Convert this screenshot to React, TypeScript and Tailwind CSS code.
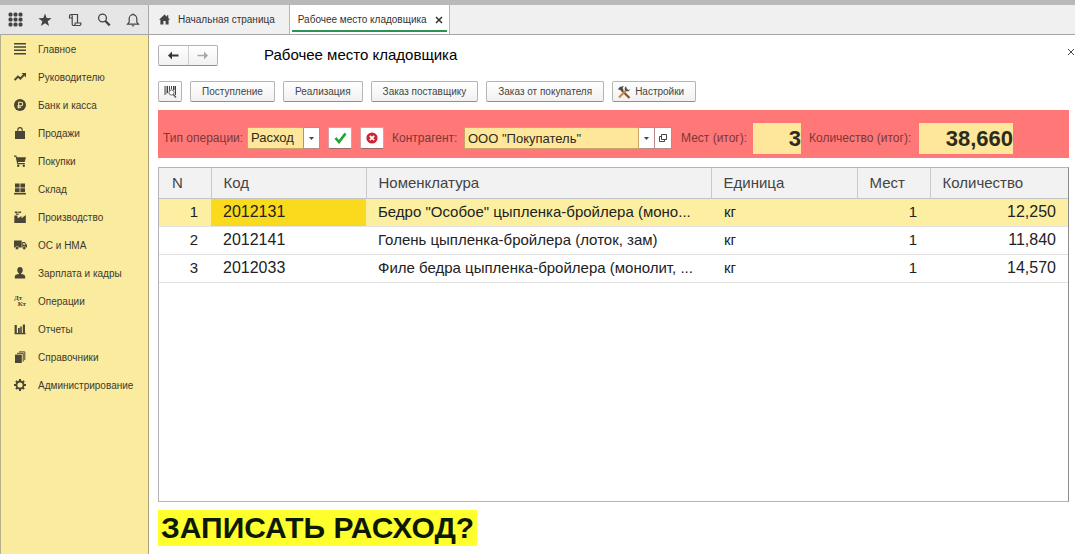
import React, { useState } from 'react';

const cn = (...classes: any[]) => classes.filter(Boolean).join(' ');

const Icon = ({ size = 12, children }: any) => (
  <svg width={size} height={size} viewBox="0 0 12 12" fill="currentColor" className="shrink-0" aria-hidden="true">
    {children}
  </svg>
);

const MenuIcon = () => (
  <Icon><path d="M0 0h12v1.500H0zM0 3.300h12v1.500H0zM0 6.600h12v1.500H0zM0 10h12v1.500H0z" /></Icon>
);

const TrendIcon = () => (
  <Icon>
    <path d="M.6 9 4 5.600l2.400 2L10 3.800" fill="none" stroke="currentColor" strokeWidth="2" />
    <path d="M7.600 2H12v4.400z" />
  </Icon>
);

const RubleIcon = () => (
  <Icon>
    <circle cx="6" cy="6" r="6" />
    <path d="M4.700 9.600V3.200h2.200a1.700 1.700 0 0 1 0 3.500H3.400M3.400 8.200h3.800" fill="none" stroke="#fbeb9e" strokeWidth="1.100" />
  </Icon>
);

const BagIcon = () => (
  <Icon>
    <path d="M3.800 4.500V2.800a2.200 2.200 0 0 1 4.400 0v1.700" fill="none" stroke="currentColor" strokeWidth="1.100" />
    <path d="M1 4h10v8H1z" />
  </Icon>
);

const CartIcon = () => (
  <Icon>
    <path d="M0 .6h2.300l.6 1.600H12L10.700 7H4l.2 1h6.600v1.200H3.300L1.600 1.800H0z" />
    <circle cx="4.200" cy="10.800" r="1.200" />
    <circle cx="9.800" cy="10.800" r="1.200" />
  </Icon>
);

const StockIcon = () => (
  <Icon><path d="M1 .5h4.600v4H1zM6.400.5H11v4H6.400zM1 5.200h4.600v4H1zM6.400 5.200H11v4H6.400zM0 10h12v1.600H0z" /></Icon>
);

const FactoryIcon = () => (
  <Icon>
    <path d="M.3 4.500h3l.6 2.700L7.500 5v2.200L11.800 4V12H.3z" />
    <path d="M.8.600h2.700v1.400H.8zM1.800 2.400h3v1.400h-3zM4.400.6h2.700v1.300H4.400z" />
  </Icon>
);

const TruckIcon = () => (
  <svg width="13" height="12" viewBox="0 0 13 12" fill="currentColor" className="shrink-0" aria-hidden="true">
    <path d="M0 1.500h7.700v7.100H0zM8.200 3h2.600L13 6v2.600H8.200zM9.200 4v1.800h2.400L10.300 4z" fillRule="evenodd" />
    <circle cx="3" cy="9" r="1.700" stroke="#fbeb9e" strokeWidth=".5" />
    <circle cx="10.200" cy="9" r="1.700" stroke="#fbeb9e" strokeWidth=".5" />
  </svg>
);

const PersonIcon = () => (
  <Icon>
    <ellipse cx="6" cy="3.200" rx="2.700" ry="3.100" />
    <path d="M4.900 5.500h2.200v1.600c2.200.3 4.100 1 4.100 2.500v1.900H.8V9.600c0-1.500 1.900-2.200 4.100-2.500z" />
  </Icon>
);

const DebitCreditIcon = () => (
  <span className="flex w-3 shrink-0 flex-col font-['Liberation_Serif',serif] text-[7px] leading-[6px] font-bold" aria-hidden="true">
    <span>Дт</span>
    <span className="self-end">Кт</span>
  </span>
);

const ReportIcon = () => (
  <Icon><path d="M.6 2h2.200v8H.6zM4 5h1.800v5H4zM6.200 3.500h1.600V10H6.200zM8.800 1.500h2.200V10H8.800zM.6 10h11v1.300H.6z" /></Icon>
);

const BooksIcon = () => (
  <Icon>
    <path d="M1 3.600h6.800V12H1z" />
    <path d="M3 2.300h6.200V10.500M5 .9h5.800v8.200" fill="none" stroke="currentColor" strokeWidth="1" />
  </Icon>
);

const GearIcon = () => (
  <Icon>
    <path d="M6 0v12M0 6h12M1.900 1.900l8.200 8.200M10.100 1.900l-8.200 8.200" stroke="currentColor" strokeWidth="2" />
    <circle cx="6" cy="6" r="4.500" />
    <circle cx="6" cy="6" r="2.600" fill="#fbeb9e" />
  </Icon>
);

const SECTIONS = [
  { title: 'Главное', icon: MenuIcon },
  { title: 'Руководителю', icon: TrendIcon },
  { title: 'Банк и касса', icon: RubleIcon },
  { title: 'Продажи', icon: BagIcon },
  { title: 'Покупки', icon: CartIcon },
  { title: 'Склад', icon: StockIcon },
  { title: 'Производство', icon: FactoryIcon },
  { title: 'ОС и НМА', icon: TruckIcon },
  { title: 'Зарплата и кадры', icon: PersonIcon },
  { title: 'Операции', icon: DebitCreditIcon },
  { title: 'Отчеты', icon: ReportIcon },
  { title: 'Справочники', icon: BooksIcon },
  { title: 'Администрирование', icon: GearIcon },
];

const ROWS = [
  { code: '2012131', name: 'Бедро "Особое" цыпленка-бройлера (моно...', unit: 'кг', places: 1, qty: '12,250' },
  { code: '2012141', name: 'Голень цыпленка-бройлера (лоток, зам)', unit: 'кг', places: 1, qty: '11,840' },
  { code: '2012033', name: 'Филе бедра цыпленка-бройлера (монолит, ...', unit: 'кг', places: 1, qty: '14,570' },
];

const TOOLS = [
  {
    label: 'Меню функций',
    icon: (
      <svg width="15" height="15" viewBox="0 0 15 15" fill="currentColor" aria-hidden="true">
        {[1, 6, 11].map((y) => [1, 6, 11].map((x) => <rect key={`${x}-${y}`} x={x - 0.5} y={y - 0.5} width="4" height="4" rx="1.500" />))}
      </svg>
    ),
  },
  {
    label: 'Избранное',
    icon: (
      <svg width="14" height="14" viewBox="0 0 14 14" fill="currentColor" aria-hidden="true">
        <path d="M7 .5 8.700 5.100l4.900.2-3.900 3 1.400 4.700L7 10.300 2.900 13l1.400-4.700-3.900-3 4.900-.2z" />
      </svg>
    ),
  },
  {
    label: 'История',
    icon: (
      <svg width="14" height="14" viewBox="0 0 14 14" fill="none" stroke="currentColor" strokeWidth="1.200" aria-hidden="true">
        <path d="M4 5H1.500V3A1.500 1.500 0 0 1 3 1.500h6.500V10M3 1.500A1.500 1.500 0 0 1 4.200 3v8a1.500 1.500 0 0 0 1.500 1.500h6A1.200 1.200 0 0 0 12.800 11v-1H7.200v1a1.500 1.500 0 0 1-1.500 1.500" />
      </svg>
    ),
  },
  {
    label: 'Поиск',
    icon: (
      <svg width="14" height="14" viewBox="0 0 14 14" fill="none" stroke="currentColor" aria-hidden="true">
        <circle cx="5.500" cy="5" r="3.900" strokeWidth="1.300" />
        <path d="m8.400 8 4.300 4.300" strokeWidth="2.400" />
      </svg>
    ),
  },
  {
    label: 'Уведомления',
    icon: (
      <svg width="14" height="14" viewBox="0 0 14 14" fill="none" stroke="currentColor" strokeWidth="1.200" aria-hidden="true">
        <path d="M1.500 11.200h11L10.800 9V5.500a3.800 3.800 0 0 0-7.600 0V9zM7 1.700V.4" />
        <path d="M5.300 12.300h3.400L7 13.800z" fill="currentColor" stroke="none" />
      </svg>
    ),
  },
];

const Caret = () => (
  <svg width="5" height="3" viewBox="0 0 5 3" fill="#444" aria-hidden="true">
    <path d="M0 0h5L2.500 3z" />
  </svg>
);

const ToolbarButton = ({ className, children, ...rest }: any) => (
  <button
    className={cn(
      'flex h-[21px] items-center justify-center rounded-xs border border-[#b4b4b4] border-b-[#8f8f8f] bg-linear-to-b from-white to-[#f1f1f1] text-[10px] whitespace-nowrap text-[#444]',
      className
    )}
    {...rest}
  >
    {children}
  </button>
);

const Sidebar = () => (
  <nav className="w-[149px] shrink-0 border-r border-l border-r-[#a9a27a] border-l-[#b5b08c] bg-[#fbeb9e]">
    {SECTIONS.map(({ title, icon: SectionIcon }) => (
      <a key={title} href="#" className="flex h-7 items-center pl-[13px] text-[10px] whitespace-nowrap text-[#3c3a30]">
        <span className="flex w-6 text-[#4a4636]"><SectionIcon /></span>
        {title}
      </a>
    ))}
  </nav>
);

const TopBar = () => (
  <header className="flex h-[35px] border-t-5 border-b border-t-[#b9b9b9] border-b-[#a6a6a6] bg-[#f0f0f0]">
    <div className="flex w-[149px] shrink-0 items-center justify-between border-r border-[#a6a6a6] bg-[#e6e6e6] pr-2 pl-2">
      {TOOLS.map((tool) => (
        <button key={tool.label} aria-label={tool.label} className="text-[#444]">{tool.icon}</button>
      ))}
    </div>
    <a href="#" className="flex items-center gap-2 border-r border-[#b5b5b5] pr-3.5 pl-[10px] text-[10px] whitespace-nowrap text-[#333]">
      <svg width="11" height="11" viewBox="0 0 11 11" fill="#444" aria-hidden="true">
        <path d="M5.500.5 0 5.800h1.400V10.500h3V7h2.200v3.500h3V5.800H11L9.300 4.100V1.300H8v1.500z" />
      </svg>
      Начальная страница
    </a>
    <div className="flex border-r border-[#b5b5b5] bg-white px-0.5">
      <div className="mb-0.5 flex items-center gap-2 border-b-2 border-[#2f9153] pt-1 pr-1 pl-1.5 text-[10px] whitespace-nowrap text-[#333]">
        Рабочее место кладовщика
        <button aria-label="Закрыть вкладку">
          <svg width="8" height="8" viewBox="0 0 8 8" stroke="#333" strokeWidth="1.500" aria-hidden="true"><path d="m1 1 6 6M7 1 1 7" /></svg>
        </button>
      </div>
    </div>
  </header>
);

const OperationPanel = () => {
  const [type, setType] = useState('Расход');
  const [partner, setPartner] = useState('ООО "Покупатель"');

  return (
    <div className="mt-2 flex h-12 items-center bg-[#ff7777] pt-2 pl-[5px] text-xs whitespace-nowrap text-[#7a3838]">
      <label htmlFor="type" className="w-[84px]">Тип операции:</label>
      <div className="relative flex">
        <select
          id="type"
          value={type}
          onChange={(e) => setType(e.target.value)}
          className="h-[22px] w-[73px] appearance-none border border-[#c9a36a] bg-[#fee69a] pl-[3px] text-[13px] text-[#2b2b1c]"
        >
          <option>Расход</option>
          <option>Приход</option>
        </select>
        <span className="pointer-events-none absolute inset-y-0 right-0 flex w-[17px] items-center justify-center border border-[#b98b8b] bg-white"><Caret /></span>
      </div>
      <button aria-label="Записать" className="ml-2 flex h-[22px] w-6 items-center justify-center rounded-xs border border-[#d9a0a0] border-b-[#9a6a6a] bg-white">
        <svg width="13" height="12" viewBox="0 0 13 12" fill="none" stroke="#1fa32e" strokeWidth="2.600" aria-hidden="true"><path d="m1.500 6 3.500 4L11.500 1.500" /></svg>
      </button>
      <button aria-label="Отменить" className="ml-2 flex h-[22px] w-6 items-center justify-center rounded-xs border border-[#d9a0a0] border-b-[#9a6a6a] bg-white">
        <svg width="12" height="12" viewBox="0 0 12 12" aria-hidden="true">
          <circle cx="6" cy="6" r="5.600" fill="#cb2635" />
          <path d="m3.800 3.800 4.400 4.400M8.200 3.800 3.800 8.200" stroke="#fff" strokeWidth="1.700" />
        </svg>
      </button>
      <label htmlFor="partner" className="ml-2 w-[72px]">Контрагент:</label>
      <input
        id="partner"
        value={partner}
        onChange={(e) => setPartner(e.target.value)}
        className="h-[22px] w-[175px] min-w-0 border border-[#c9a36a] bg-[#fee69a] pl-[3px] text-[13px] text-[#2b2b1c]"
      />
      <button aria-label="Выбрать из списка" className="flex h-[22px] w-4 items-center justify-center border-y border-r border-[#b98b8b] bg-white"><Caret /></button>
      <button aria-label="Открыть" className="flex h-[22px] w-[17px] items-center justify-center border-y border-r border-[#b98b8b] bg-white">
        <svg width="8" height="8" viewBox="0 0 8 8" fill="none" stroke="#444" aria-hidden="true"><path d="M2.500.5h5v5h-5zM2.500 2.500h-2v5h5v-2" /></svg>
      </button>
      <label htmlFor="places" className="ml-[9px] w-[72px]">Мест (итог):</label>
      <output id="places" className="w-12 bg-[#fee69a] text-right text-[22px] leading-[31px] font-bold text-[#2b2b1c]">3</output>
      <label htmlFor="total" className="ml-2 w-[110px]">Количество (итог):</label>
      <output id="total" className="w-[94px] bg-[#fee69a] text-right text-[22px] leading-[31px] font-bold text-[#2b2b1c]">38,660</output>
    </div>
  );
};

const ItemsTable = () => {
  const [selected, setSelected] = useState(0);

  return (
    <div className="mt-[9px] flex-1 border border-[#b4b4b4] border-r-[#8c8c8c] bg-white">
      <table className="w-full table-fixed border-collapse text-[15px] text-[#222]">
        <colgroup>
          <col className="w-[52px]" />
          <col className="w-[155px]" />
          <col />
          <col className="w-[146px]" />
          <col className="w-[73px]" />
          <col className="w-[138px]" />
        </colgroup>
        <thead>
          <tr className="h-[30px] border-b border-[#c4c4c4] bg-[#f2f2f2] text-left text-[#444]">
            {['N', 'Код', 'Номенклатура', 'Единица', 'Мест', 'Количество'].map((h) => (
              <th key={h} className="border-l border-[#c9c9c9] py-0 pl-3 font-normal first:border-l-0 first:pl-[13px]">{h}</th>
            ))}
          </tr>
        </thead>
        <tbody>
          {ROWS.map((row, idx) => (
            <tr
              key={row.code}
              onClick={() => setSelected(idx)}
              className={cn('h-7 border-b border-[#e2e2e2]', selected === idx && 'bg-[#fcefa1]')}
            >
              <td className="py-0 pr-[13px] text-right">{idx + 1}</td>
              <td className={cn('py-0 pl-3 text-base', selected === idx && 'bg-[#f9da1c]')}>{row.code}</td>
              <td className="py-0 pl-3 whitespace-nowrap">{row.name}</td>
              <td className="py-0 pl-[13px]">{row.unit}</td>
              <td className="py-0 pr-[13px] text-right">{row.places}</td>
              <td className="py-0 pr-3 text-right text-base">{row.qty}</td>
            </tr>
          ))}
        </tbody>
      </table>
    </div>
  );
};

export default function App() {
  return (
    <div className="flex min-h-screen flex-col bg-white font-['Liberation_Sans',Arial,sans-serif]">
      <TopBar />
      <div className="flex flex-1">
        <Sidebar />
        <main className="flex min-w-0 flex-1 flex-col pt-[9px] pr-1.5 pb-2 pl-[9px]">
          <div className="flex items-center">
            <div className="flex h-[21px] w-[60px] rounded-xs border border-[#b4b4b4] border-b-[#8f8f8f] bg-linear-to-b from-white to-[#f1f1f1]">
              <button aria-label="Назад" className="flex flex-1 items-center justify-center border-r border-[#cfcfcf]">
                <svg width="12" height="9" viewBox="0 0 12 9" aria-hidden="true"><path d="M5 .5 1 4.500l4 4V5.500h6.500v-2H5z" fill="#333" /></svg>
              </button>
              <button aria-label="Вперед" className="flex flex-1 items-center justify-center">
                <svg width="12" height="9" viewBox="0 0 12 9" aria-hidden="true"><path d="m7 .5 4 4-4 4V5.300H.5V3.700H7z" fill="#a8a8a8" /></svg>
              </button>
            </div>
            <h1 className="ml-[46px] flex-1 text-[15px] leading-[22px] text-black">Рабочее место кладовщика</h1>
            <button aria-label="Закрыть" className="-mr-1.5 mb-1.5">
              <svg width="8" height="8" viewBox="0 0 8 8" stroke="#444" aria-hidden="true"><path d="m1 1 6 6M7 1 1 7" /></svg>
            </button>
          </div>
          <div className="mt-[15px] flex gap-2">
            <ToolbarButton className="w-6" aria-label="Поиск по штрихкоду">
              <svg width="13" height="13" viewBox="0 0 13 13" aria-hidden="true">
                <path d="M1 1v9M3.500 1v7M5.500 1v5M7.500 1v3M9.500 1v4M11.500 1v9" stroke="#444" />
                <path d="M2.300 1v8M10.500 1v4" stroke="#444" strokeWidth=".6" />
                <circle cx="7.500" cy="7.500" r="2.600" fill="#fff" stroke="#666" />
                <path d="m9.300 9.500 2.700 3" stroke="#555" strokeWidth="1.400" />
              </svg>
            </ToolbarButton>
            <ToolbarButton className="px-[11px]">Поступление</ToolbarButton>
            <ToolbarButton className="px-[11px]">Реализация</ToolbarButton>
            <ToolbarButton className="px-[11px]">Заказ поставщику</ToolbarButton>
            <ToolbarButton className="px-[11px]">Заказ от покупателя</ToolbarButton>
            <ToolbarButton className="gap-1 pr-[11px] pl-1">
              <svg width="14" height="14" viewBox="0 0 14 14" fill="none" aria-hidden="true">
                <path d="M5 5.500 12.500 13" stroke="#8a4f22" strokeWidth="2.200" />
                <path d="M1 4.500C2 2 4 1 7 1.200L5.500 3l1 1.500L4.500 6.500 3.300 5z" fill="#4b4b4b" />
                <path d="M9.500 5 2 12.500" stroke="#c28a45" strokeWidth="2.200" />
                <path d="M9 1.200a3 3 0 0 0-.5 4.300 3 3 0 0 0 4.800-1.200L11.300 5 9.800 3.500z" fill="#555" />
              </svg>
              Настройки
            </ToolbarButton>
          </div>
          <OperationPanel />
          <ItemsTable />
          <div className="mt-2 flex">
            <button className="bg-[#ffff2e] px-[3px] text-[30px] leading-9 font-bold text-[#0c1a05]">ЗАПИСАТЬ РАСХОД?</button>
          </div>
        </main>
      </div>
    </div>
  );
}
